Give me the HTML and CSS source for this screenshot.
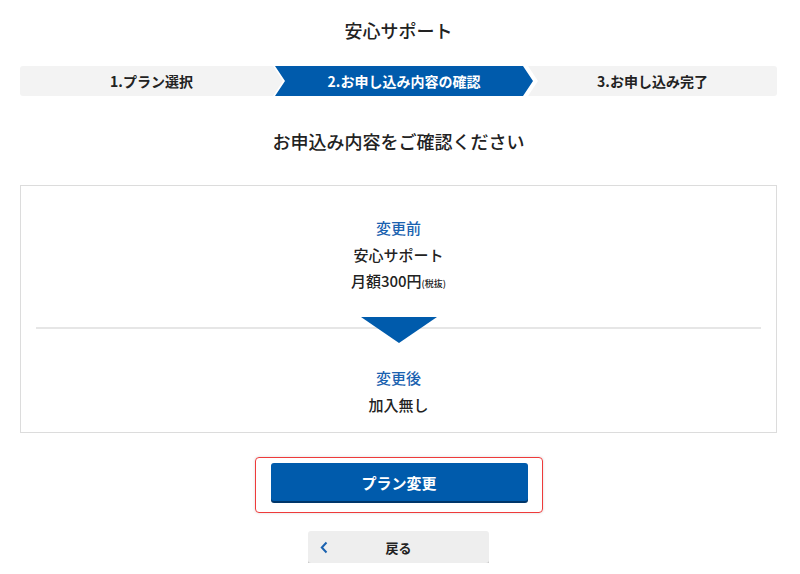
FILE: index.html
```html
<!DOCTYPE html>
<html lang="ja">
<head>
    <meta charset="utf-8">
    <title>安心サポート</title>
    <link rel="stylesheet" href="styles.css">
</head>
<body>
    <div class="page">
        <h1 class="title">安心サポート</h1>

        <ol class="steps">
            <li class="step step-first">1.プラン選択</li>
            <li class="step step-current">2.お申し込み内容の確認</li>
            <li class="step step-last">3.お申し込み完了</li>
        </ol>

        <h2 class="lead">お申込み内容をご確認ください</h2>

        <div class="summary">
            <div class="block before">
                <p class="label">変更前</p>
                <p class="name">安心サポート</p>
                <p class="price">月額300円<small>(税抜)</small></p>
            </div>
            <div class="divider">
                <div class="arrow"></div>
            </div>
            <div class="block after">
                <p class="label">変更後</p>
                <p class="name">加入無し</p>
            </div>
        </div>

        <div class="actions">
            <div class="focus-ring">
                <button class="btn-primary">プラン変更</button>
            </div>
            <button class="btn-back">
                <svg class="chev" width="8" height="13" viewBox="0 0 8 13"><path d="M6.5 1.5 L1.8 6.5 L6.5 11.5" fill="none" stroke="#1a62b0" stroke-width="2"/></svg>
                <span>戻る</span>
            </button>
        </div>
    </div>
</body>
</html>
```

FILE: styles.css
```css
body {
    margin: 0;
    font-family: "Noto Sans CJK JP", "Noto Sans", sans-serif;
    color: #222;
    background: #fff;
}
.page {
    padding: 17px 23px 0 20px;
}
p {
    margin: 0;
}
.title {
    margin: 0 0 22px;
    font-size: 18px;
    line-height: 27px;
    font-weight: 500;
    text-align: center;
}

/* step bar */
.steps {
    display: flex;
    margin: 0;
    padding: 0;
    list-style: none;
    height: 30px;
    border-radius: 3px;
    overflow: hidden;
}
.step {
    display: flex;
    align-items: center;
    justify-content: center;
    background: #f3f3f3;
    font-size: 14px;
    font-weight: 700;
    color: #222;
}
.step-first {
    width: 263px;
    clip-path: polygon(0 0, calc(100% - 10px) 0, 100% 50%, calc(100% - 10px) 100%, 0 100%);
}
.step-current {
    width: 258px;
    margin-left: -8px;
    background: #005bac;
    color: #fff;
    clip-path: polygon(0 0, calc(100% - 10px) 0, 100% 50%, calc(100% - 10px) 100%, 0 100%, 10px 50%);
}
.step-last {
    flex: 1;
    margin-left: -5px;
    clip-path: polygon(0 0, 100% 0, 100% 100%, 0 100%, 10px 50%);
}

.lead {
    margin: 32px 0 30px;
    font-size: 18px;
    line-height: 27px;
    font-weight: 500;
    text-align: center;
}

/* summary box */
.summary {
    border: 1px solid #dcdcdc;
    text-align: center;
    padding: 0 0 14px;
}
.block.before {
    padding-top: 28px;
}
.block.after {
    padding-top: 21px;
}
.label {
    font-size: 15px;
    line-height: 28px;
    font-weight: 500;
    color: #1a62b0;
}
.name, .price {
    font-size: 15px;
    line-height: 26px;
    font-weight: 500;
}
.price small {
    font-size: 9px;
    font-weight: 500;
}
.divider {
    margin: 20px 15px 0;
    height: 26px;
    background: linear-gradient(#e6e6e6, #e6e6e6) 0 10px / 100% 2px no-repeat;
}
.arrow {
    width: 0;
    height: 0;
    margin: 0 auto;
    border-left: 38px solid transparent;
    border-right: 38px solid transparent;
    border-top: 26px solid #005bac;
}

/* buttons */
.actions {
    display: flex;
    flex-direction: column;
    align-items: center;
    margin-top: 24px;
}
.focus-ring {
    padding: 5px 14px 11px 15px;
    border: 1px solid #ee3b3b;
    border-radius: 4px;
    box-shadow: 0 0 3px rgba(0, 0, 0, 0.15);
}
.btn-primary {
    display: block;
    width: 257px;
    height: 38px;
    border: none;
    border-radius: 3px;
    background: #005bac;
    box-shadow: 0 2px 0 #00366a;
    color: #fff;
    font-family: inherit;
    font-size: 15px;
    font-weight: 700;
    cursor: pointer;
}
.btn-back {
    position: relative;
    display: flex;
    align-items: center;
    justify-content: center;
    margin-top: 18px;
    width: 181px;
    height: 32px;
    border: none;
    border-radius: 3px;
    background: #eeeeee;
    box-shadow: 0 2px 0 #c8c8c8;
    color: #222;
    font-family: inherit;
    font-size: 13px;
    font-weight: 700;
    cursor: pointer;
}
.chev {
    position: absolute;
    left: 12px;
    top: 10px;
}
```
